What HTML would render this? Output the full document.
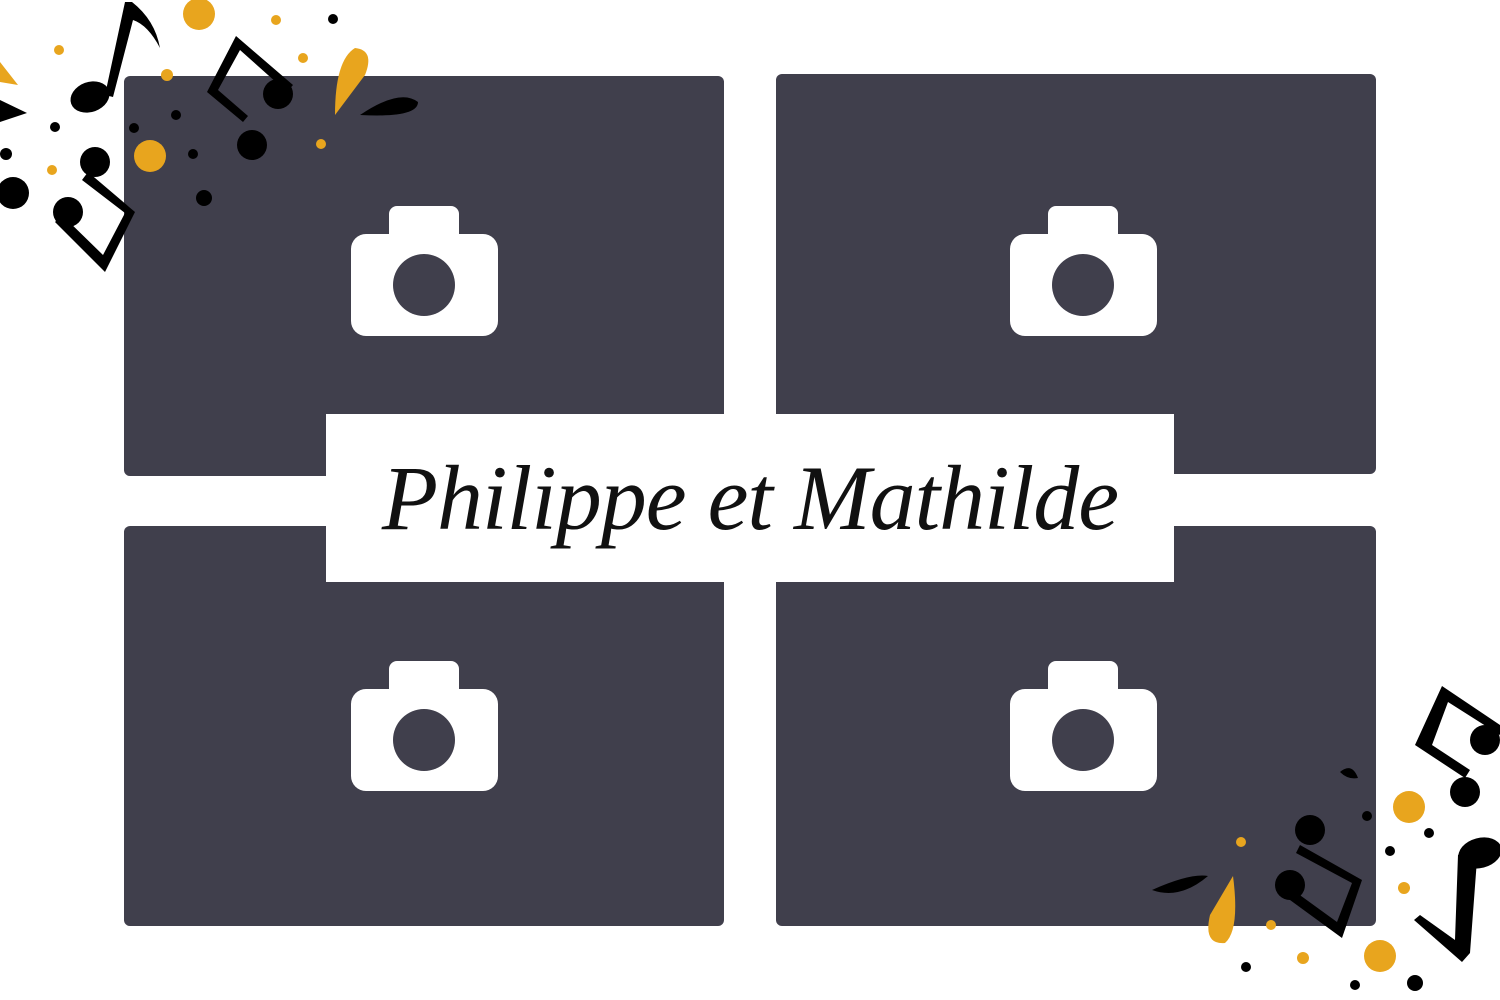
<!DOCTYPE html>
<html><head><meta charset="utf-8"><style>
html,body{margin:0;padding:0;width:1500px;height:1000px;background:#fff;overflow:hidden;position:relative}
.p{position:absolute;width:600px;height:400px;background:#403f4c;border-radius:6px}
.cam{position:absolute;width:147px;height:130px}
.lab{position:absolute;left:326px;top:414px;width:848px;height:168px;background:#fff;text-align:center;font-family:"Liberation Serif",serif;font-style:italic;font-size:92px;line-height:168px;color:#111;letter-spacing:-1px}
svg.d{position:absolute;left:0;top:0}
</style></head><body>
<div class="p" style="left:124px;top:76px"></div>
<div class="p" style="left:776px;top:74px"></div>
<div class="p" style="left:124px;top:526px"></div>
<div class="p" style="left:776px;top:526px"></div>
<svg class="d" width="1500" height="1000">
<defs><g id="cam"><rect x="38" y="0" width="70" height="40" rx="8" fill="#fff"/><rect x="0" y="28" width="147" height="102" rx="15" fill="#fff"/><circle cx="73" cy="79" r="31" fill="#403f4c"/></g></defs>
<use href="#cam" x="351" y="206"/><use href="#cam" x="1010" y="206"/>
<use href="#cam" x="351" y="661"/><use href="#cam" x="1010" y="661"/>
<!-- top-left decorations -->
<g fill="#000">
<ellipse cx="90" cy="97" rx="20" ry="15" transform="rotate(-20 90 97)"/>
<path d="M105 95 L125 2 L132 2 Q155 20 160 48 Q148 25 133 20 L113 97Z"/>
<path d="M0 100 L27 113 L0 122Z"/>
<circle cx="13" cy="193" r="16"/><circle cx="6" cy="154" r="6"/>
<circle cx="95" cy="162" r="15"/><circle cx="68" cy="212" r="15"/>
<path d="M88 172 L135 212 L105 272 L55 222 L62 215 L103 255 L125 213 L82 180Z"/>
<path d="M236 36 L293 85 L287 92 L240 50 L218 90 L248 116 L243 122 L207 92Z"/>
<circle cx="278" cy="94" r="15"/><circle cx="252" cy="145" r="15"/>
<path d="M360 115 Q400 88 418 102 Q418 118 360 115Z"/>
<circle cx="176" cy="115" r="5"/><circle cx="134" cy="128" r="5"/><circle cx="193" cy="154" r="5"/>
<circle cx="333" cy="19" r="5"/><circle cx="55" cy="127" r="5"/><circle cx="204" cy="198" r="8"/>
</g>
<g fill="#e8a51e">
<circle cx="199" cy="14" r="16"/><circle cx="150" cy="156" r="16"/><circle cx="52" cy="170" r="5"/>
<circle cx="303" cy="58" r="5"/><circle cx="321" cy="144" r="5"/><circle cx="59" cy="50" r="5"/><circle cx="276" cy="20" r="5"/><circle cx="167" cy="75" r="6"/>
<path d="M335 115 Q335 60 355 48 Q375 50 365 75Z"/>
<path d="M0 62 L18 85 L0 82Z"/>
</g>
<!-- bottom-right decorations -->
<g fill="#000">
<path d="M1442 686 L1500 725 L1500 735 L1448 702 L1432 745 L1470 770 L1465 778 L1415 745Z"/>
<circle cx="1485" cy="740" r="15"/><circle cx="1465" cy="792" r="15"/>
<path d="M1458 855 L1470 845 L1478 846 L1470 953 L1462 962 L1414 920 L1420 915 L1455 940Z"/>
<ellipse cx="1480" cy="853" rx="22" ry="15" transform="rotate(-15 1480 853)"/>
<circle cx="1310" cy="830" r="15"/><circle cx="1290" cy="885" r="15"/>
<path d="M1300 845 L1362 880 L1342 938 L1290 900 L1297 893 L1337 922 L1352 883 L1296 853Z"/>
<path d="M1152 890 Q1190 873 1208 876 Q1180 900 1152 890Z"/>
<circle cx="1367" cy="816" r="5"/><circle cx="1390" cy="851" r="5"/><circle cx="1429" cy="833" r="5"/>
<circle cx="1246" cy="967" r="5"/><circle cx="1355" cy="985" r="5"/><circle cx="1415" cy="983" r="8"/>
<path d="M1340 772 Q1352 762 1358 778 Q1348 780 1340 772Z"/>
</g>
<g fill="#e8a51e">
<circle cx="1409" cy="807" r="16"/><circle cx="1380" cy="956" r="16"/><circle cx="1241" cy="842" r="5"/><circle cx="1271" cy="925" r="5"/>
<circle cx="1404" cy="888" r="6"/><circle cx="1303" cy="958" r="6"/>
<path d="M1233 876 Q1240 930 1225 943 Q1203 945 1210 915Z"/>
</g>
</svg>
<div class="lab">Philippe et Mathilde</div>
</body></html>
